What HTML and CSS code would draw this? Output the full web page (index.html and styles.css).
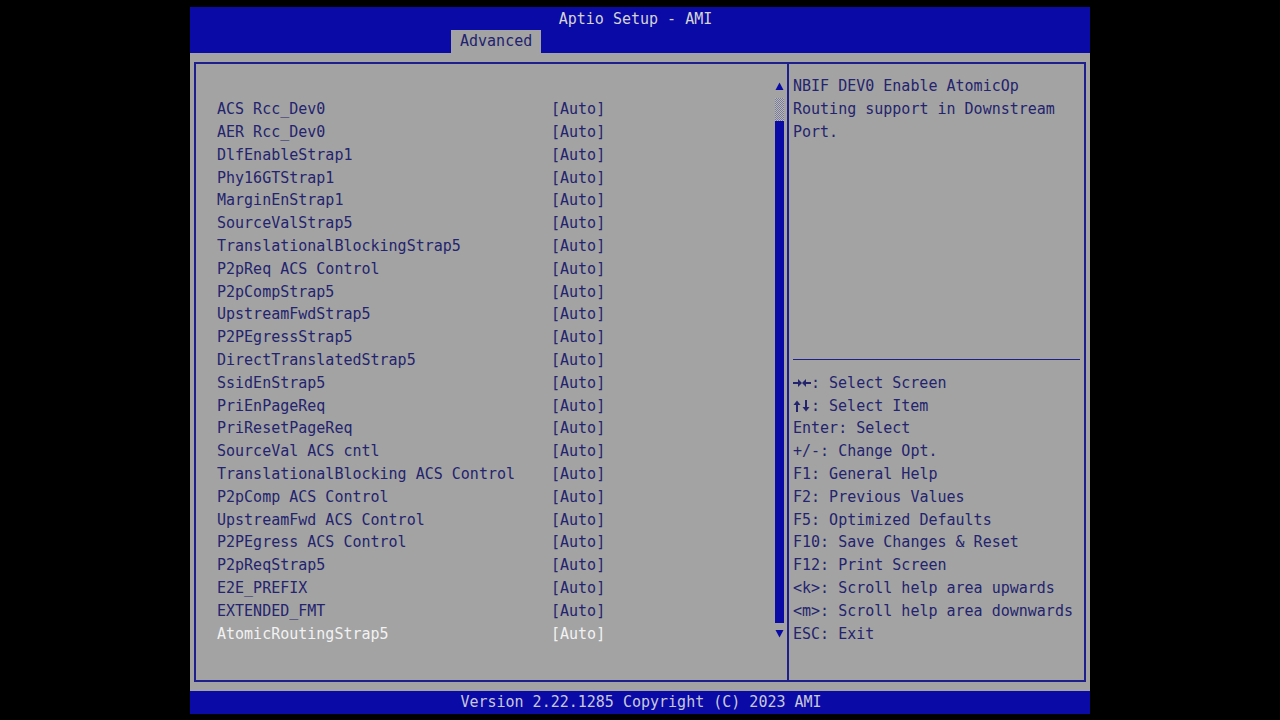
FILE: index.html
```html
<!DOCTYPE html>
<html>
<head>
<meta charset="utf-8">
<link rel="stylesheet" href="styles.css">
</head>
<body>
<div class="screen">
  <header class="header">
    <div class="title">Aptio Setup - AMI</div>
    <div class="tabs"><span class="tab">Advanced</span></div>
  </header>
  <main class="main">
    <div class="frame">
      <section class="left">
        <div class="list">
          <div class="row"></div>
          <div class="row"><span class="name">ACS Rcc_Dev0</span><span class="val">[Auto]</span></div>
          <div class="row"><span class="name">AER Rcc_Dev0</span><span class="val">[Auto]</span></div>
          <div class="row"><span class="name">DlfEnableStrap1</span><span class="val">[Auto]</span></div>
          <div class="row"><span class="name">Phy16GTStrap1</span><span class="val">[Auto]</span></div>
          <div class="row"><span class="name">MarginEnStrap1</span><span class="val">[Auto]</span></div>
          <div class="row"><span class="name">SourceValStrap5</span><span class="val">[Auto]</span></div>
          <div class="row"><span class="name">TranslationalBlockingStrap5</span><span class="val">[Auto]</span></div>
          <div class="row"><span class="name">P2pReq ACS Control</span><span class="val">[Auto]</span></div>
          <div class="row"><span class="name">P2pCompStrap5</span><span class="val">[Auto]</span></div>
          <div class="row"><span class="name">UpstreamFwdStrap5</span><span class="val">[Auto]</span></div>
          <div class="row"><span class="name">P2PEgressStrap5</span><span class="val">[Auto]</span></div>
          <div class="row"><span class="name">DirectTranslatedStrap5</span><span class="val">[Auto]</span></div>
          <div class="row"><span class="name">SsidEnStrap5</span><span class="val">[Auto]</span></div>
          <div class="row"><span class="name">PriEnPageReq</span><span class="val">[Auto]</span></div>
          <div class="row"><span class="name">PriResetPageReq</span><span class="val">[Auto]</span></div>
          <div class="row"><span class="name">SourceVal ACS cntl</span><span class="val">[Auto]</span></div>
          <div class="row"><span class="name">TranslationalBlocking ACS Control</span><span class="val">[Auto]</span></div>
          <div class="row"><span class="name">P2pComp ACS Control</span><span class="val">[Auto]</span></div>
          <div class="row"><span class="name">UpstreamFwd ACS Control</span><span class="val">[Auto]</span></div>
          <div class="row"><span class="name">P2PEgress ACS Control</span><span class="val">[Auto]</span></div>
          <div class="row"><span class="name">P2pReqStrap5</span><span class="val">[Auto]</span></div>
          <div class="row"><span class="name">E2E_PREFIX</span><span class="val">[Auto]</span></div>
          <div class="row"><span class="name">EXTENDED_FMT</span><span class="val">[Auto]</span></div>
          <div class="row selected"><span class="name">AtomicRoutingStrap5</span><span class="val">[Auto]</span></div>
        </div>
        <div class="scroll">
          <div class="arrow"><svg width="9" height="9" viewBox="0 0 9 9"><polygon points="0.5,8 4.5,0.5 8.5,8" fill="#0a0aa6"/></svg></div>
          <div class="track-dots"></div>
          <div class="track-bar"></div>
          <div class="arrow"><svg width="9" height="9" viewBox="0 0 9 9"><polygon points="0.5,1 4.5,8.5 8.5,1" fill="#0a0aa6"/></svg></div>
        </div>
      </section>
      <section class="right">
        <div class="help">
          <div class="row">NBIF DEV0 Enable AtomicOp</div>
          <div class="row">Routing support in Downstream</div>
          <div class="row">Port.</div>
        </div>
        <div class="sep"></div>
        <div class="keys">
          <div class="row"><svg class="k" width="18" height="12" viewBox="0 0 18 12"><g stroke="#24246e" stroke-width="2" fill="#24246e"><line x1="0" y1="6" x2="6" y2="6"/><line x1="12" y1="6" x2="18" y2="6"/></g><polygon points="5,2 9,6 5,10" fill="#24246e"/><polygon points="13,2 9,6 13,10" fill="#24246e"/></svg>: Select Screen</div>
          <div class="row"><svg class="k" width="18" height="12" viewBox="0 0 18 12"><g stroke="#24246e" stroke-width="2"><line x1="4" y1="4" x2="4" y2="12"/><line x1="13" y1="0" x2="13" y2="8"/></g><polygon points="0.5,5 4,0.5 7.5,5" fill="#24246e"/><polygon points="9.5,7 13,11.5 16.5,7" fill="#24246e"/></svg>: Select Item</div>
          <div class="row">Enter: Select</div>
          <div class="row">+/-: Change Opt.</div>
          <div class="row">F1: General Help</div>
          <div class="row">F2: Previous Values</div>
          <div class="row">F5: Optimized Defaults</div>
          <div class="row">F10: Save Changes &amp; Reset</div>
          <div class="row">F12: Print Screen</div>
          <div class="row">&lt;k&gt;: Scroll help area upwards</div>
          <div class="row">&lt;m&gt;: Scroll help area downwards</div>
          <div class="row">ESC: Exit</div>
        </div>
      </section>
    </div>
  </main>
  <footer class="footer">Version 2.22.1285 Copyright (C) 2023 AMI</footer>
</div>
</body>
</html>
```

FILE: styles.css
```css
html, body {
  margin: 0;
  padding: 0;
  background: #000;
}
body {
  width: 1280px;
  height: 720px;
  overflow: hidden;
  font-family: "DejaVu Sans Mono", "Liberation Mono", monospace;
  font-size: 15px;
}
.screen {
  width: 900px;
  margin: 7px 0 0 190px;
  display: flex;
  flex-direction: column;
}
.header {
  background: #0a0aa6;
  height: 45.6px;
  display: flex;
  flex-direction: column;
}
.title {
  height: 22.8px;
  line-height: 24px;
  color: #d4d4d4;
  text-align: center;
  padding-right: 9px;
}
.tabs {
  height: 22.8px;
  padding-left: 261px;
  display: flex;
}
.tab {
  background: #a3a3a3;
  color: #22226e;
  width: 81px;
  padding-left: 9px;
  line-height: 23px;
}
.main {
  background: #a3a3a3;
  height: 638.4px;
  padding: 9.4px 4px 0 4px;
  box-sizing: border-box;
}
.frame {
  height: 619.6px;
  box-sizing: border-box;
  border: 2px solid #1e1e8c;
  display: flex;
}
.row {
  height: 22.8px;
  line-height: 22.8px;
  white-space: pre;
  color: #24246e;
}
.left {
  width: 591px;
  display: flex;
  padding-top: 11.4px;
  box-sizing: border-box;
}
.list {
  width: 579px;
  padding-left: 21px;
  box-sizing: border-box;
}
.list .row {
  display: flex;
}
.name {
  width: 333px;
  flex: none;
}
.val {
  padding-left: 1px;
}
.selected .name, .selected .val {
  color: #f2f2f2;
}
.scroll {
  width: 9px;
  display: flex;
  flex-direction: column;
  margin-right: 3px;
}
.arrow {
  height: 22.8px;
  display: flex;
  align-items: center;
  justify-content: center;
}
.track-dots {
  height: 22.8px;
  background-color: #a3a3a3;
  background-image: repeating-conic-gradient(#7a7a9a 0 25%, #b8b8b8 0 50%);
  background-size: 2px 2px;
}
.track-bar {
  height: 501.6px;
  background: #0a0aa6;
}
.right {
  flex: 1;
  border-left: 2px solid #1e1e8c;
  padding: 11.4px 4px 0 4px;
  display: flex;
  flex-direction: column;
}
.help {
  height: 283.6px;
}
.sep {
  height: 1.5px;
  background: #1e1e8c;
  width: 287px;
}
.keys {
  padding-top: 11.3px;
}
.k {
  vertical-align: -1px;
}
.footer {
  background: #0a0aa6;
  height: 22.8px;
  line-height: 22.8px;
  color: #c8c8dc;
  text-align: center;
  padding-left: 2px;
}
```
